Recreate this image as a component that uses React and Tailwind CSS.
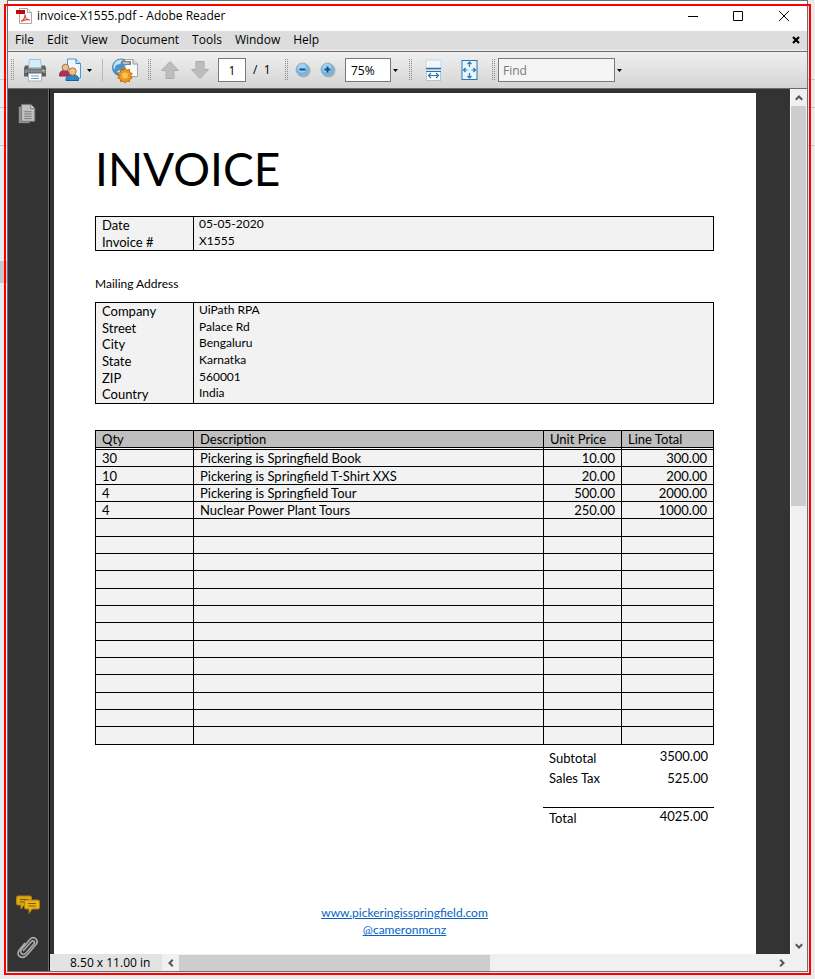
import React from "react";

const menus = ["File", "Edit", "View", "Document", "Tools", "Window", "Help"];

const invoiceInfo = [
  ["Date", "05-05-2020"],
  ["Invoice #", "X1555"],
];

const address = [
  ["Company", "UiPath RPA"],
  ["Street", "Palace Rd"],
  ["City", "Bengaluru"],
  ["State", "Karnatka"],
  ["ZIP", "560001"],
  ["Country", "India"],
];

const items = [
  ["30", "Pickering is Springfield Book", "10.00", "300.00"],
  ["10", "Pickering is Springfield T-Shirt XXS", "20.00", "200.00"],
  ["4", "Pickering is Springfield Tour", "500.00", "2000.00"],
  ["4", "Nuclear Power Plant Tours", "250.00", "1000.00"],
];

const rows = Array.from({ length: 17 }, (_, i) => items[i] || ["", "", "", ""]);

function PdfIcon() {
  return (
    <svg width="16" height="16" viewBox="0 0 16 16" className="shrink-0">
      <path d="M3.5.5h8l4 4v11h-12z" fill="#fff" stroke="#a8a8a8" />
      <path d="M11.5.5v4h4" fill="#eee" stroke="#a8a8a8" />
      <rect x="0" y="2" width="9" height="4" fill="#c4070c" />
      <path d="M5 13.5c2-1 4-4 4-7 0 3 2 5.500 5 5.500-3-.8-6 0-9 1.500z" fill="none" stroke="#e2443a" strokeWidth="1.200" />
    </svg>
  );
}

function PrinterIcon() {
  return (
    <svg width="24" height="24" viewBox="0 0 24 24">
      <path d="M5.500 9.500L6.500 1.500h11l1 8z" fill="#d6ecfa" stroke="#9fc4dc" />
      <path d="M2 7.500h3.500v3h13v-3H22l1 3v8H1v-8z" fill="#5b6063" />
      <path d="M1.500 11.500h21v3.500h-21z" fill="#85898c" />
      <path d="M4 15.500h16" stroke="#2f3335" strokeWidth="1.500" />
      <rect x="5.500" y="15.500" width="13" height="7.500" fill="#fff" stroke="#a5b3bd" />
      <path d="M8 18h8M8 20.500h8" stroke="#6fa3cc" />
      <circle cx="20.500" cy="12.500" r="1" fill="#b4ef5c" />
    </svg>
  );
}

function ShareIcon() {
  return (
    <svg width="24" height="24" viewBox="0 0 24 24">
      <path d="M8.500 1h8.500l4.500 4.500V20H8.500z" fill="#eef7fd" stroke="#4d9ad3" />
      <path d="M17 1v4.500h4.500" fill="#cfe6f6" stroke="#3383be" />
      <path d="M.5 18c0-4 1.500-5.500 5-5.500s5 1.500 5 5.500z" fill="#b02f58" stroke="#8c2746" />
      <circle cx="6.500" cy="9.500" r="3.300" fill="#e9bd96" stroke="#a8754d" />
      <path d="M7 22.500c0-4.500 2-5.500 6.500-5.500s6 1 6 5.500z" fill="#2f86c7" stroke="#1b5f98" />
      <circle cx="13.500" cy="13.500" r="3.700" fill="#f4bd83" stroke="#b5713b" />
    </svg>
  );
}

function CollaborateIcon() {
  return (
    <svg width="27" height="25" viewBox="0 0 27 25">
      <circle cx="9" cy="9.500" r="8.500" fill="#4b93c8" stroke="#3c7db0" />
      <path d="M2 6c3-5 7-5 9-4l-3 4-4 1-2 5c-1-2-.5-5 0-6zM5 13l5-1 1 4-3 1z" fill="#c4e4f6" />
      <path d="M13 1.500h8l4.500 4.500v12.500H13z" fill="#fafafa" stroke="#a6a6a6" />
      <path d="M21 1.500V6h4.500" fill="#e3e3e3" stroke="#969696" />
      <path d="M9 3h10v4H9z" fill="#7f8487" />
      <path d="M11 5h6" stroke="#e4e4e4" strokeWidth="1.200" />
      <path d="M13 10l1.700 2.300 2.800-.8v2.900l2.700 1.100-1.700 2.300 1.700 2.300-2.700 1v2.500l-2.800-.5L13 25l-1.700-1.900-2.800.5v-2.500l-2.700-1 1.700-2.300-1.700-2.300 2.700-1.100v-2.900l2.800.8z" fill="#ef9a1c" stroke="#b9700f" />
      <circle cx="13" cy="17.500" r="3" fill="#fbc25a" />
    </svg>
  );
}

function PageArrow({ down }) {
  return (
    <svg width="20" height="20" viewBox="0 0 20 20" className={down ? "rotate-180" : ""}>
      <path d="M10 1.500L18.500 10.500H14V18.500H6V10.500H1.500z" fill="#bdbdbd" stroke="#acacac" strokeLinejoin="round" />
    </svg>
  );
}

function ZoomIcon({ plus }) {
  return (
    <svg width="16" height="16" viewBox="0 0 16 16">
      <circle cx="8.500" cy="8.500" r="7" fill="#a9afb3" />
      <circle cx="7.500" cy="7.500" r="6.500" fill="#79b3dc" stroke="#8fb4cd" />
      <circle cx="7" cy="6" r="4.500" fill="#a3cfec" />
      <path d={plus ? "M4.500 7.500h6M7.500 4.500v6" : "M4.500 7.500h6"} stroke="#0f4f8c" strokeWidth="2" />
    </svg>
  );
}

function FitWidthIcon() {
  return (
    <svg width="17" height="22" viewBox="0 0 17 22">
      <path d="M1 1h15v9H1z" fill="#f1f8fd" stroke="#c5d9e6" />
      <path d="M1 9.500h15" stroke="#2b76b0" strokeWidth="1.500" />
      <rect x="1.500" y="12.500" width="14" height="9" fill="#fff" stroke="#a9c8de" />
      <path d="M1 12.500h15" stroke="#2b76b0" />
      <path d="M3.500 16.500h10M6 14l-2.500 2.500L6 19M11 14l2.500 2.500L11 19" fill="none" stroke="#2b76b0" strokeWidth="1.200" />
    </svg>
  );
}

function FitPageIcon() {
  return (
    <svg width="17" height="22" viewBox="0 0 17 22">
      <rect x="1" y="1.500" width="15" height="19" fill="#eaf4fc" stroke="#2b76b0" />
      <path d="M8.500 3v5M8.500 14v5M2.500 11h4M10.500 11h4M6.500 5l2-2 2 2M6.500 17l2 2 2-2M4.500 9l-2 2 2 2M12.500 9l2 2-2 2" fill="none" stroke="#2b76b0" strokeWidth="1.200" />
    </svg>
  );
}

function Caret() {
  return (
    <svg width="5" height="3" viewBox="0 0 5 3">
      <path d="M0 0h5L2.500 3z" fill="#000" />
    </svg>
  );
}

function Chevron({ className }) {
  return (
    <svg width="8" height="8" viewBox="0 0 8 8" className={className}>
      <path d="M.8 5.800L4 2.500l3.200 3.300" fill="none" stroke="#555" strokeWidth="2" />
    </svg>
  );
}

function Grip() {
  return (
    <svg width="4" height="22" viewBox="0 0 4 22" className="shrink-0">
      <path d="M.5 0v22M2.500 0v22" stroke="#8c8c8c" strokeDasharray="1 1" />
    </svg>
  );
}

function TitleBar() {
  return (
    <header className="flex h-[30px] items-center bg-white pl-2">
      <PdfIcon />
      <h1 className="ml-[5px] flex-1 text-xs">invoice-X1555.pdf - Adobe Reader</h1>
      <div className="flex">
        <button aria-label="Minimize" className="flex h-7 w-[45px] items-center justify-center">
          <svg width="10" height="10" viewBox="0 0 10 10"><path d="M0 5.500h10" stroke="#000" /></svg>
        </button>
        <button aria-label="Maximize" className="flex h-7 w-[45px] items-center justify-center">
          <svg width="10" height="10" viewBox="0 0 10 10"><path d="M.5.5h9v9h-9z" fill="none" stroke="#000" /></svg>
        </button>
        <button aria-label="Close" className="flex h-7 w-[47px] items-center justify-center">
          <svg width="10" height="10" viewBox="0 0 10 10"><path d="M0 0l10 10M10 0L0 10" stroke="#000" /></svg>
        </button>
      </div>
    </header>
  );
}

function MenuBar() {
  return (
    <nav className="flex h-5 items-center border-b border-[#f2f2f2] bg-[#dddddd] px-[7px] pb-px text-xs">
      <div className="flex flex-1 gap-[13px]">
        {menus.map((m) => (
          <button key={m}>{m}</button>
        ))}
      </div>
      <button aria-label="Close document">
        <svg width="8" height="8" viewBox="0 0 8 8" className="block"><path d="M1 1l6 6M7 1L1 7" stroke="#000" strokeWidth="2.200" /></svg>
      </button>
    </nav>
  );
}

function Toolbar() {
  return (
    <div className="flex h-[38px] items-center border-y border-[#6b6b6b] bg-linear-to-b from-[#f0f0f0] to-[#d4d4d4] pl-[3px] text-xs">
      <Grip />
      <button aria-label="Print" className="ml-2"><PrinterIcon /></button>
      <button aria-label="Share" className="ml-3 flex items-center gap-1"><ShareIcon /><Caret /></button>
      <span className="ml-[10px] h-[22px] w-px bg-[#b9b9b9]" />
      <button aria-label="Collaborate" className="ml-[9px]"><CollaborateIcon /></button>
      <div className="ml-[9px] flex"><Grip /></div>
      <button aria-label="Previous page" className="ml-2"><PageArrow /></button>
      <button aria-label="Next page" className="ml-[10px]"><PageArrow down /></button>
      <input aria-label="Page number" defaultValue="1" className="ml-2 h-6 w-7 border border-[#7a7a7a] bg-white text-center" />
      <span className="ml-[7px] w-8 whitespace-pre">{"/  1"}</span>
      <Grip />
      <button aria-label="Zoom out" className="ml-[6px]"><ZoomIcon /></button>
      <button aria-label="Zoom in" className="ml-[9px]"><ZoomIcon plus /></button>
      <input aria-label="Zoom level" defaultValue="75%" className="ml-[9px] h-6 w-[46px] border border-[#7a7a7a] bg-white pl-[5px]" />
      <button aria-label="Zoom presets" className="ml-[2px]"><Caret /></button>
      <div className="ml-[11px] flex"><Grip /></div>
      <button aria-label="Fit width" className="ml-3"><FitWidthIcon /></button>
      <button aria-label="Fit page" className="ml-[19px]"><FitPageIcon /></button>
      <div className="ml-[14px] flex"><Grip /></div>
      <input aria-label="Find" placeholder="Find" className="ml-[2px] h-6 w-[117px] border border-[#7a7a7a] bg-[#f5f5f5] pl-1 placeholder:text-[#777777]" />
      <button aria-label="Find options" className="ml-[2px]"><Caret /></button>
    </div>
  );
}

function Sidebar() {
  return (
    <aside className="flex w-[42px] flex-col items-center border-r border-black bg-[#333333] shadow-[inset_-1px_0_#6a6a6a]">
      <button aria-label="Pages" className="mr-1 mt-[14px]">
        <svg width="20" height="22" viewBox="0 0 20 24">
          <path d="M1 4h12v18H1z" fill="#8f8f8f" />
          <path d="M4 1.500h10l4.500 4.500v14H4z" fill="#c0c0c0" stroke="#777" />
          <path d="M14 1.500V6h4.500" fill="#ddd" stroke="#777" />
          <path d="M7 9.500h8M7 12h8M7 14.500h8M7 17h8" stroke="#777" />
        </svg>
      </button>
      <div className="flex-1" />
      <button aria-label="Comments" className="mr-[2px]">
        <svg width="24" height="20" viewBox="0 0 24 20">
          <path d="M2 1h12q1.500 0 1.500 1.500v6Q15.500 10 14 10H8l-3 4v-4H2Q.5 10 .5 8.500v-6Q.5 1 2 1z" fill="#d8a914" stroke="#b8860b" />
          <path d="M4 4.500h8M4 7h8" stroke="#7a5200" />
          <path d="M10 5h12q1.500 0 1.500 1.500v6q0 1.500-1.500 1.500h-6l-3 4.500V14h-3q-1.500 0-1.500-1.500v-6Q8.500 5 10 5z" fill="#e3b71c" stroke="#b8760b" />
          <path d="M12 8.500h8M12 11h8" stroke="#8a5a00" />
        </svg>
      </button>
      <button aria-label="Attachments" className="mb-3 mr-[2px] mt-5">
        <svg width="22" height="24" viewBox="0 0 22 24">
          <path d="M6 16l8.500-9.500c1.500-1.700 4 .3 2.500 2.200L9 18c-3 3.200-7.200-.2-4.500-3.500L13 4.200c3.500-4 9.500.8 6 5.300l-9 10.500c-5 5.200-11.500.5-8-4.500L8 8" fill="none" stroke="#a9a9a9" strokeWidth="1.700" />
        </svg>
      </button>
    </aside>
  );
}

function FieldTable({ data, label }) {
  return (
    <table aria-label={label} className="w-full table-fixed border-separate border-spacing-0 border border-black bg-[#f2f2f2]">
      <tbody>
        {data.map(([k, v], i) => (
          <tr key={k} className={i % 3 === 1 ? "h-4" : "h-[17px]"}>
            <th scope="row" className="w-[97px] p-0 pl-[6px] pt-px text-left align-top text-[13px] leading-[15px] font-normal">{k}</th>
            <td className="border-l border-black p-0 pl-[5px] align-top text-xs leading-[14px]">{v}</td>
          </tr>
        ))}
      </tbody>
    </table>
  );
}

function ItemsTable() {
  const head = "border-t border-l border-b-[3px] border-t-black border-l-black border-b-black [border-bottom-style:double] bg-[#bfbfbf] bg-clip-padding p-0 px-[6px] text-left leading-4 font-normal";
  const cell = "border-b border-l border-black p-0 px-[6px] leading-4";
  return (
    <table className="w-full table-fixed border-separate border-spacing-0 border-r border-black text-[13px]">
      <thead>
        <tr className="h-5">
          <th className={head + " w-[98px]"}>Qty</th>
          <th className={head}>Description</th>
          <th className={head + " w-[78px]"}>Unit Price</th>
          <th className={head + " w-[92px]"}>Line Total</th>
        </tr>
      </thead>
      <tbody className="bg-[#f2f2f2]">
        {rows.map((r, i) => (
          <tr key={i} className={i % 3 === 1 ? "h-[18px]" : "h-[17px]"}>
            <td className={cell}>{r[0]}</td>
            <td className={cell}>{r[1]}</td>
            <td className={cell + " text-right"}>{r[2]}</td>
            <td className={cell + " text-right"}>{r[3]}</td>
          </tr>
        ))}
      </tbody>
    </table>
  );
}

function Invoice() {
  return (
    <article className="ml-1 mr-[34px] mt-1 flex-1 bg-white pl-[41px] pr-[42px] pt-[44px] font-[Lato,sans-serif] text-[13px] text-black">
      <h2 className="mb-[15px] text-[46px] leading-[64px]">INVOICE</h2>
      <FieldTable data={invoiceInfo} label="Invoice details" />
      <h3 className="mb-[10px] mt-[25px] text-xs leading-4">Mailing Address</h3>
      <FieldTable data={address} label="Mailing address" />
      <div className="h-[26px]" />
      <ItemsTable />
      <dl className="ml-auto w-[171px]">
        <div className="flex justify-between px-[6px] pt-[3px] leading-4">
          <dt className="pt-[2px]">Subtotal</dt>
          <dd>3500.00</dd>
        </div>
        <div className="flex justify-between px-[6px] pt-1 leading-4">
          <dt>Sales Tax</dt>
          <dd>525.00</dd>
        </div>
        <div className="mt-[21px] flex justify-between border-t border-black px-[6px] leading-4">
          <dt className="pt-[2px]">Total</dt>
          <dd>4025.00</dd>
        </div>
      </dl>
      <footer className="mt-[78px] flex flex-col items-center text-xs leading-[17px] text-[#0563c1] underline">
        <a href="#site">www.pickeringisspringfield.com</a>
        <a href="#twitter">@cameronmcnz</a>
      </footer>
    </article>
  );
}

function BackgroundWindow() {
  return (
    <div aria-hidden="true" className="absolute inset-0 overflow-hidden bg-[#ebebeb]">
      <div className="h-20 border-b border-[#c8c8c8]" />
      <div className="h-7 border-b border-[#c8c8c8]" />
      <div className="h-[38px] border-b border-[#c8c8c8]" />
      <div className="mt-[115px] h-[22px] w-[7px] bg-[#c8c8c8]" />
    </div>
  );
}

export default function App() {
  return (
    <div className="relative flex min-h-screen flex-col px-[7px] pb-[7px] font-['Open_Sans','Noto_Sans',sans-serif] text-black">
      <BackgroundWindow />
      <main className="relative flex flex-1 flex-col border border-[#6f6f6f]">
        <TitleBar />
        <MenuBar />
        <Toolbar />
        <div className="flex flex-1">
          <Sidebar />
          <div className="flex min-w-0 flex-1 flex-col">
            <div className="flex flex-1">
              <div className="flex flex-1 bg-[#333333]">
                <Invoice />
              </div>
              <div className="flex w-[17px] flex-col items-center border-l border-white bg-[#f0f0f0]">
                <button aria-label="Scroll up" className="flex h-[17px] items-center"><Chevron /></button>
                <div className="flex w-full flex-1 flex-col">
                  <div className="mr-px h-[400px] bg-[#cdcdcd]" />
                </div>
                <button aria-label="Scroll down" className="flex h-[17px] items-center"><Chevron className="rotate-180" /></button>
              </div>
            </div>
            <div className="flex h-[17px] items-stretch bg-[#f0f0f0] text-xs">
              <div className="w-28 bg-[#e3e3e3] pl-5 leading-[17px]">8.50 x 11.00 in</div>
              <button aria-label="Scroll left" className="flex w-[17px] items-center justify-center"><Chevron className="-rotate-90" /></button>
              <div className="flex-1 pt-px"><div className="h-4 w-[311px] bg-[#cdcdcd]" /></div>
              <button aria-label="Scroll right" className="mr-[17px] flex w-[17px] items-center justify-center"><Chevron className="rotate-90" /></button>
            </div>
          </div>
        </div>
      </main>
      <div className="pointer-events-none absolute inset-1 border-2 border-[#ff0000]" />
    </div>
  );
}
